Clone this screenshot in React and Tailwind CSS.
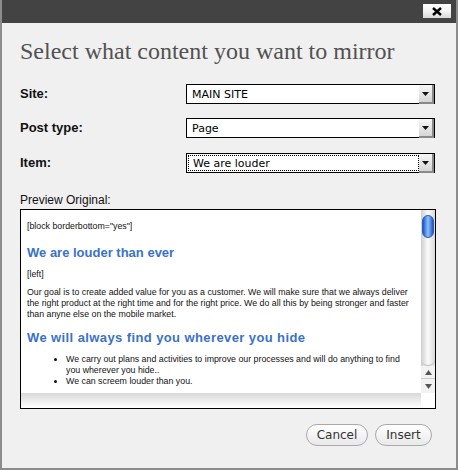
import React from 'react';

function Select({ value, focused }) {
  return (
    <div className="relative flex h-[20px] w-[249px] items-center border border-black bg-white">
      <div
        className={
          focused
            ? 'ml-[1px] flex h-[16px] flex-1 items-center border border-dotted border-black pl-[4px]'
            : 'flex flex-1 items-center pl-[5px]'
        }
      >
        <span className="font-['DejaVu_Sans',sans-serif] text-[11px] leading-none text-black">{value}</span>
      </div>
      <div className="flex h-[19px] w-[15px] items-center justify-center self-start border-r-2 border-b-2 border-[#8a8a8a] bg-gradient-to-b from-[#f7f7f7] to-[#d6d6d6]">
        <svg width="7" height="4" viewBox="0 0 7 4">
          <path d="M0 0h7L3.5 4z" fill="#111" />
        </svg>
      </div>
    </div>
  );
}

function Row({ label, value, focused, className = '' }) {
  return (
    <div className={`flex items-start ${className}`}>
      <div className="w-[166px] pt-[2px] text-[13px] font-bold leading-[16px] text-[#111]">{label}</div>
      <Select value={value} focused={focused} />
    </div>
  );
}

function Scrollbar() {
  return (
    <div className="flex w-[14px] flex-col bg-gradient-to-r from-[#cfcfcf] via-[#fbfbfb] to-[#d8d8d8]">
      <div className="mx-auto mt-[5px] h-[23px] w-[12px] rounded-full border border-[#2a5fb0] bg-gradient-to-r from-[#1d56c4] via-[#8ec0ff] to-[#1d56c4]" />
      <div className="flex-1 rounded-b-full border-b border-[#bbb]" />
      <div className="flex h-[13px] items-center justify-center border-b border-[#ccc] bg-[#f2f2f2]">
        <svg width="7" height="5" viewBox="0 0 7 5">
          <path d="M3.5 0L7 5H0z" fill="#555" />
        </svg>
      </div>
      <div className="flex h-[14px] items-center justify-center bg-[#f2f2f2]">
        <svg width="7" height="5" viewBox="0 0 7 5">
          <path d="M0 0h7L3.5 5z" fill="#555" />
        </svg>
      </div>
    </div>
  );
}

function Preview() {
  return (
    <div className="flex h-[200px] w-[416px] flex-col border border-black bg-white">
      <div className="flex h-[183px]">
        <div className="flex-1 overflow-hidden pl-[6px] pt-[11px] pr-[4px] font-['Liberation_Sans',sans-serif] text-[8.8px] leading-[11px] text-[#111]">
          <p>[block borderbottom="yes"]</p>
          <h2 className="mt-[13px] text-[13px] font-bold leading-[16px] text-[#3a72c6]">We are louder than ever</h2>
          <p className="mt-[8px]">[left]</p>
          <p className="mt-[7px]">
            Our goal is to create added value for you as a customer. We will make sure that we always deliver the right
            product at the right time and for the right price. We do all this by being stronger and faster than anyne
            else on the mobile market.
          </p>
          <h2 className="mt-[10px] text-[13px] font-bold leading-[16px] tracking-[0.4px] text-[#3a72c6]">
            We will always find you wherever you hide
          </h2>
          <ul className="mt-[8px] list-disc pl-[39px] pr-[14px]">
            <li>We carry out plans and activities to improve our processes and will do anything to find you wherever you hide..</li>
            <li>We can screem louder than you.</li>
          </ul>
        </div>
        <Scrollbar />
      </div>
      <div className="flex flex-1">
        <div className="flex-1 bg-gradient-to-b from-[#d9d9d9] via-[#ececec] to-white" />
        <div className="w-[14px] bg-white" />
      </div>
    </div>
  );
}

function Button({ children, w }) {
  return (
    <button
      className={`${w} h-[22px] rounded-full border border-[#a9a9a9] bg-gradient-to-b from-white to-[#e9e9e9] font-['DejaVu_Sans',sans-serif] text-[12px] leading-none text-[#333]`}
    >
      {children}
    </button>
  );
}

export default function App() {
  return (
    <div className="flex h-[470px] w-[458px] flex-col border-x-2 border-b-2 border-[#8c8c8c] bg-[#f0f0f0] font-['Liberation_Sans',sans-serif]">
      <div className="flex h-[23px] shrink-0 items-start justify-end bg-[#434343] pr-[5px] pt-[4px]">
        <div className="flex h-[14px] w-[28px] items-center justify-center bg-gradient-to-b from-white via-[#f4f4f4] to-[#d9d9d9]">
          <svg width="10" height="9" viewBox="0 0 10 9">
            <path d="M1 1l8 7M9 1L1 8" stroke="#000" strokeWidth="2.4" />
          </svg>
        </div>
      </div>
      <div className="flex flex-1 flex-col pl-[18px]">
        <h1 className="mt-[13px] font-['Liberation_Serif',serif] text-[24px] leading-[30px] text-[#525252]">
          Select what content you want to mirror
        </h1>
        <div className="mt-[18px] flex flex-col gap-[14px]">
          <Row label="Site:" value="MAIN SITE" />
          <Row label="Post type:" value="Page" />
          <Row label="Item:" value="We are louder" focused className="mt-[1px]" />
        </div>
        <div className="mt-[20px] text-[12px] leading-[15px] text-[#111]">Preview Original:</div>
        <div className="mt-[1px]">
          <Preview />
        </div>
        <div className="mt-[15px] flex justify-end gap-[7px] pr-[24px]">
          <Button w="w-[62px]">Cancel</Button>
          <Button w="w-[57px]">Insert</Button>
        </div>
      </div>
    </div>
  );
}
